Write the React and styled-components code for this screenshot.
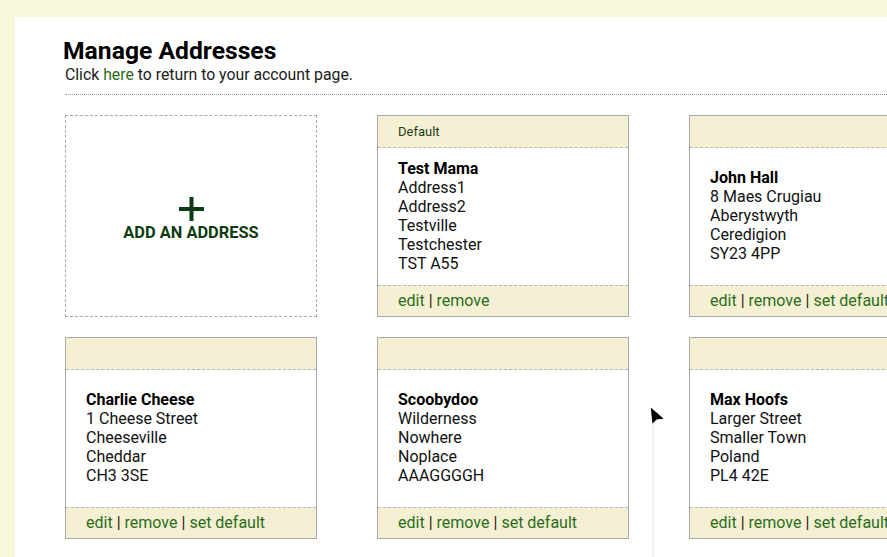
import React from 'react'
import styled, { createGlobalStyle } from 'styled-components'

const addresses = [
    {name: 'Test Mama', lines: ['Address1', 'Address2', 'Testville', 'Testchester', 'TST A55'], isDefault: true},
    {name: 'John Hall', lines: ['8 Maes Crugiau', 'Aberystwyth', 'Ceredigion', 'SY23 4PP']},
    {name: 'Charlie Cheese', lines: ['1 Cheese Street', 'Cheeseville', 'Cheddar', 'CH3 3SE']},
    {name: 'Scoobydoo', lines: ['Wilderness', 'Nowhere', 'Noplace', 'AAAGGGGH']},
    {name: 'Max Hoofs', lines: ['Larger Street', 'Smaller Town', 'Poland', 'PL4 42E']},
]

function AddressCard({address}) {
    return (
        <Card>
            <CardHeader>{address.isDefault ? 'Default' : ''}</CardHeader>
            <CardBody>
                <Name>{address.name}</Name>
                {address.lines.map((line) => <Line key={line}>{line}</Line>)}
            </CardBody>
            <CardFooter>
                <Action href="#">edit</Action>
                <Sep>|</Sep>
                <Action href="#">remove</Action>
                {!address.isDefault && (
                    <>
                        <Sep>|</Sep>
                        <Action href="#">set default</Action>
                    </>
                )}
            </CardFooter>
        </Card>
    )
}

function App() {
    return (
        <>
            <GlobalStyle />
            <Page>
                <Panel>
                    <Title>Manage Addresses</Title>
                    <Intro>Click <IntroLink href="#">here</IntroLink> to return to your account page.</Intro>
                    <Grid>
                        <AddCard>
                            <svg width="27" height="26" viewBox="0 0 27 26">
                                <path d="M13.5 1v24M1 13h25" stroke="#0d3a10" strokeWidth="4" />
                            </svg>
                            <AddLabel>ADD AN ADDRESS</AddLabel>
                        </AddCard>
                        {addresses.map((a) => <AddressCard key={a.name} address={a} />)}
                    </Grid>
                </Panel>
                <Pointer width="22" height="160" viewBox="0 0 22 160">
                    <line x1="5" y1="16" x2="5" y2="160" stroke="#ececec" strokeWidth="1.5" />
                    <path d="M2 2 L17 15 L9 16 L4 21 Z" fill="#000" stroke="#fff" strokeWidth="1.2" strokeLinejoin="round" />
                </Pointer>
            </Page>
        </>
    )
}

const GlobalStyle = createGlobalStyle`
    html, body{
        margin: 0;
        padding: 0;
        background: #f7f7da;
        overflow: hidden;
    }
    body{
        font-family: Roboto, "Liberation Sans", sans-serif;
        color: #111;
    }
`

const Page = styled.div`
    position: relative;
    padding: 17px 0 0 15px;
    height: 540px;
`

const Panel = styled.div`
    background: #fff;
    width: 1000px;
    padding: 21px 0 30px 50px;
    box-sizing: border-box;
`

const Title = styled.h1`
    margin: 0 0 1px -2px;
    font-size: 24.7px;
    line-height: 26px;
    font-weight: 700;
    color: #000;
`

const Intro = styled.p`
    margin: 0;
    font-size: 15.8px;
    line-height: 19px;
    color: #1a1a1a;
    padding-bottom: 10px;
    border-bottom: 1px dotted #9a9a9a;
`

const IntroLink = styled.a`
    color: #2b6e1a;
    text-decoration: none;
`

const Grid = styled.div`
    display: grid;
    grid-template-columns: repeat(3, 252px);
    grid-auto-rows: 202px;
    column-gap: 60px;
    row-gap: 20px;
    margin-top: 20px;
`

const AddCard = styled.div`
    border: 1px dashed #aaa;
    box-sizing: border-box;
    display: flex;
    flex-direction: column;
    align-items: center;
    justify-content: center;
    padding-top: 6px;
    svg{
        display: block;
        margin-bottom: 1px;
    }
`

const AddLabel = styled.div`
    font-size: 16.4px;
    font-weight: 700;
    color: #0d3a10;
    line-height: 19px;
`

const Card = styled.div`
    border: 1px solid #aaa;
    box-sizing: border-box;
    display: flex;
    flex-direction: column;
`

const CardHeader = styled.div`
    height: 32px;
    box-sizing: border-box;
    background: #f5f0d4;
    border-bottom: 1px dashed #b5b5b5;
    display: flex;
    align-items: center;
    padding: 0 20px;
    font-size: 13px;
    color: #1f3d12;
`

const CardBody = styled.div`
    flex: 1;
    display: flex;
    flex-direction: column;
    justify-content: center;
    padding: 0 20px 2px;
    font-size: 16px;
    line-height: 19px;
`

const Name = styled.div`
    font-weight: 700;
    color: #000;
`

const Line = styled.div`
    color: #111;
`

const CardFooter = styled.div`
    height: 31px;
    box-sizing: border-box;
    background: #f5f0d4;
    border-top: 1px dashed #b5b5b5;
    display: flex;
    align-items: center;
    padding: 0 20px 2px;
    font-size: 16px;
    white-space: nowrap;
`

const Action = styled.a`
    color: #2b6e1a;
    text-decoration: none;
`

const Sep = styled.span`
    color: #2a1a10;
    margin: 0 4px;
`

const Pointer = styled.svg`
    position: absolute;
    left: 648px;
    top: 404px;
`

export default App
